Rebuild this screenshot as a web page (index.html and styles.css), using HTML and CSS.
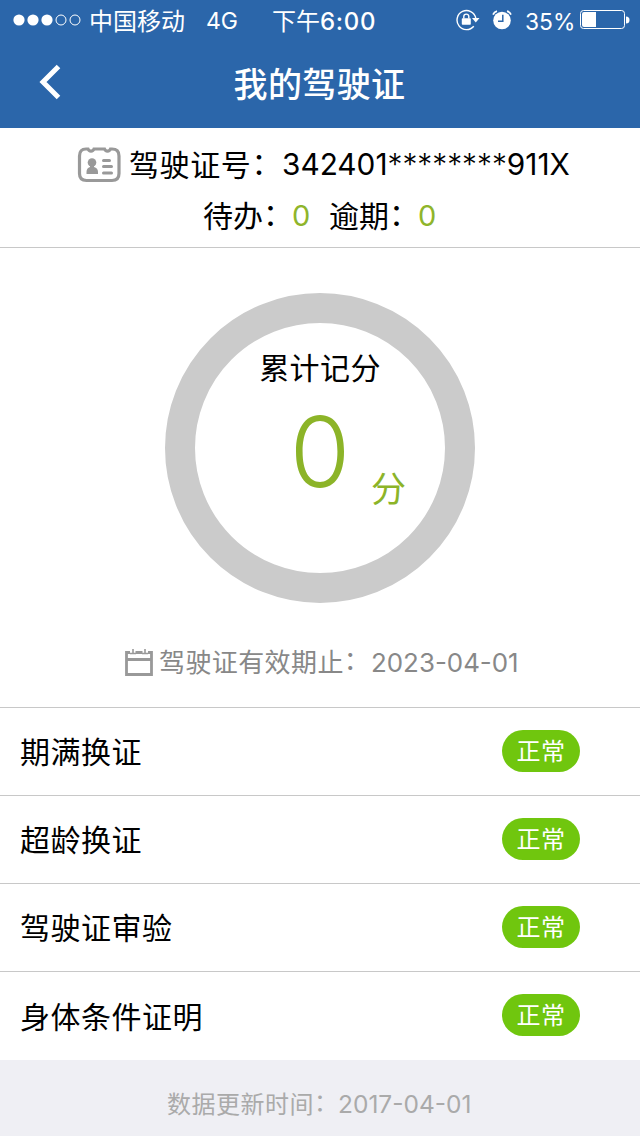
FILE: index.html
```html
<!DOCTYPE html>
<html lang="zh-CN">
<head>
  <meta charset="UTF-8">
  <meta name="viewport" content="width=device-width, initial-scale=1.0">
  <title>我的驾驶证</title>
  <link rel="stylesheet" href="styles.css">
</head>
<body>
  <div class="status-bar">
    <svg class="signal" width="68" height="12" viewBox="0 0 68 12">
      <g fill="#fff">
        <circle cx="6" cy="6" r="5.6"/>
        <circle cx="20" cy="6" r="5.6"/>
        <circle cx="34" cy="6" r="5.6"/>
      </g>
      <g fill="none" stroke="#fff">
        <circle cx="48" cy="6" r="5"/>
        <circle cx="62" cy="6" r="5"/>
      </g>
    </svg>
    <span class="carrier">中国移动</span>
    <span class="network">4G</span>
    <span class="time">下午<b>6:00</b></span>
    <svg class="lock" width="24" height="22" viewBox="0 0 24 22">
      <path d="M17.8 17.2A9.5 9.5 0 1 1 19.8 9" fill="none" stroke="#fff" stroke-width="1.4"/>
      <path d="M16 9h7.5l-3.7 4.4z" fill="#fff"/>
      <rect x="5.8" y="9.3" width="9" height="6.4" rx="0.8" fill="#fff"/>
      <path d="M7.8 9.5V7.6a2.5 2.5 0 0 1 5 0v1.9" fill="none" stroke="#fff" stroke-width="1.4"/>
    </svg>
    <svg class="alarm" width="20" height="20" viewBox="0 0 20 20">
      <circle cx="10" cy="10.5" r="8.8" fill="#fff"/>
      <path d="M1 4.6A6 6 0 0 1 5 1.2M15 1.2a6 6 0 0 1 4 3.4" fill="none" stroke="#fff" stroke-width="1.8"/>
      <path d="M10.8 4.8v6.4H6" fill="none" stroke="#2b66aa" stroke-width="1.5"/>
    </svg>
    <span class="percent">35%</span>
    <svg class="battery" width="50" height="20" viewBox="0 0 50 20">
      <rect x="0.5" y="0.5" width="44" height="18" rx="3" fill="none" stroke="#fff"/>
      <path d="M4 2h12v15H4a2 2 0 0 1-2-2V4a2 2 0 0 1 2-2z" fill="#fff"/>
      <path d="M46 6.5a3 3 0 0 1 0 7z" fill="#fff"/>
    </svg>
  </div>

  <div class="nav">
    <svg class="back" width="22" height="36" viewBox="0 0 22 36">
      <path d="M19.500 2.500L4 18l15.500 15.500" fill="none" stroke="#fff" stroke-width="5"/>
    </svg>
    <h1>我的驾驶证</h1>
  </div>

  <div class="license">
    <div class="license-no">
      <svg width="44" height="36" viewBox="0 0 44 36">
        <path d="M11 2H9Q2.500 2 2.500 9V26.500Q2.500 33.500 9.500 33.500H35Q42 33.500 42 26.500V9Q42 2 35 2H33.500A3.200 3.200 0 0 1 27.500 2H17A3.200 3.200 0 0 1 11 2Z" fill="none" stroke="#999" stroke-width="3.200"/>
        <circle cx="15" cy="15.500" r="4.300" fill="#999"/>
        <path d="M13 18h4v2q4 1 4 5v2H9.500V25q0-4 3.500-5z" fill="#999"/>
        <path d="M26.500 13.500h6M26.500 19.500h8M26.500 26h8" stroke="#999" stroke-width="3" stroke-linecap="round"/>
      </svg>
      <span class="label">驾驶证号<i>：</i></span>
      <span class="number">342401<i>********</i>911X</span>
    </div>
    <div class="todo">
      <span class="label">待办<i>：</i></span><em>0</em>
      <span class="label">逾期<i>：</i></span><em>0</em>
    </div>
  </div>

  <div class="score">
    <div class="ring">
      <div class="ring-title">累计记分</div>
      <div class="points"><span class="value">0</span><span class="unit">分</span></div>
    </div>
    <div class="valid">
      <svg width="28" height="29" viewBox="0 0 28 29">
        <path d="M5 4.500H1.500v22h25v-22H23M10.500 4.500h7M1 11.500h26" fill="none" stroke="#999" stroke-width="2.800"/>
        <path d="M5 5.500h6M17 5.500h6M8 1v5M20 1v5" fill="none" stroke="#999" stroke-width="1.600"/>
      </svg>
      <span class="label">驾驶证有效期止<i>：</i></span>
      <span class="date">2023-04-01</span>
    </div>
  </div>

  <ul class="list">
    <li><span>期满换证</span><span class="tag">正常</span></li>
    <li><span>超龄换证</span><span class="tag">正常</span></li>
    <li><span>驾驶证审验</span><span class="tag">正常</span></li>
    <li><span>身体条件证明</span><span class="tag">正常</span></li>
  </ul>

  <div class="footer">
    <span class="label">数据更新时间<i>：</i></span>
    <span class="date">2017-04-01</span>
  </div>
</body>
</html>
```
FILE: styles.css
```css
* {
  box-sizing: border-box;
}

body {
  margin: 0;
  width: 640px;
  height: 1136px;
  overflow: hidden;
  font-family: Inter, "Noto Sans CJK SC", sans-serif;
  font-size: 30px;
  color: #000;
  background: #efeff4;
}

svg {
  display: block;
  flex: none;
}

span {
  white-space: nowrap;
}

.label {
  padding-bottom: 4px;
  font-family: "Noto Sans CJK SC", sans-serif;
}

.label i {
  font-style: normal;
  line-height: 0;
  vertical-align: 2px;
}

/* status bar */
.status-bar {
  display: flex;
  align-items: center;
  height: 40px;
  padding-left: 13px;
  font-size: 24px;
  color: #fff;
  background: #2b66aa;
}

.carrier {
  width: 98px;
  margin-left: 8px;
  padding-bottom: 2px;
}

.network {
  width: 52px;
  margin-left: 19px;
  padding-top: 2px;
  font-size: 23px;
}

.time {
  width: 105px;
  margin-left: 14px;
  padding-bottom: 2px;
}

.time b {
  font-weight: 500;
  font-size: 24px;
  letter-spacing: 0.700px;
}

.lock {
  margin-left: 79px;
}

.alarm {
  margin-left: 12px;
}

.percent {
  width: 48px;
  margin-left: 13px;
  padding-top: 2px;
  font-size: 22.800px;
}

.battery {
  margin-left: 7px;
}

/* title bar */
.nav {
  display: flex;
  align-items: center;
  height: 88px;
  padding: 0 39px 4px;
  color: #fff;
  background: #2b66aa;
}

.nav h1 {
  flex: 1;
  margin: 0 23px 0 0;
  font-size: 34px;
  font-weight: 500;
  letter-spacing: 0.400px;
  text-align: center;
}

/* license number */
.license {
  height: 120px;
  padding-top: 11px;
  background: #fff;
  border-bottom: 1px solid #c8c8c8;
}

.license-no {
  display: flex;
  align-items: center;
  height: 52px;
  padding-left: 77px;
}

.license-no .label {
  width: 153px;
  margin-left: 8px;
  letter-spacing: 0.600px;
}

.license-no .number {
  padding-bottom: 2px;
  font-size: 29.800px;
}

.number i {
  font-style: normal;
  font-weight: 300;
}

.todo {
  display: flex;
  align-items: center;
  height: 50px;
  padding-left: 203px;
}

.todo span {
  width: 89px;
}

.todo em {
  width: 37px;
  padding-bottom: 2px;
  font-style: normal;
  font-size: 29px;
  color: #8fb52b;
}

/* score ring */
.score {
  height: 460px;
  padding-top: 45px;
  background: #fff;
  border-bottom: 1px solid #c8c8c8;
}

.ring {
  width: 310px;
  height: 310px;
  margin: 0 auto;
  padding-top: 23px;
  border: 30px solid #cbcbcb;
  border-radius: 50%;
  text-align: center;
}

.ring-title {
  line-height: 44px;
  letter-spacing: 0.400px;
}

.points {
  display: grid;
  grid-template-columns: 1fr 60px 1fr;
  height: 120px;
  color: #8cb428;
}

.value {
  grid-column: 2;
  justify-self: center;
  line-height: 124px;
  font-size: 98px;
  font-weight: 300;
}

.unit {
  padding: 75px 0 0 21px;
  line-height: 48px;
  font-size: 35px;
  text-align: left;
}

.valid {
  display: flex;
  align-items: center;
  height: 40px;
  margin-top: 39px;
  padding-left: 125px;
  font-size: 26px;
  color: #888;
}

.valid .label {
  width: 212px;
  margin-left: 6px;
  letter-spacing: 0.400px;
}

.valid .date {
  font-size: 25.900px;
}

/* business list */
.list {
  margin: 0;
  padding: 0;
  list-style: none;
  background: #fff;
}

.list li {
  display: flex;
  align-items: center;
  justify-content: space-between;
  height: 88px;
  padding: 0 60px 2px 20px;
  letter-spacing: 0.500px;
  border-bottom: 1px solid #c8c8c8;
}

.list li:last-child {
  border-bottom: none;
}

.list span:first-child {
  padding-bottom: 1px;
}

.tag {
  width: 78px;
  height: 42px;
  line-height: 44px;
  font-size: 24px;
  text-align: center;
  color: #fff;
  background: #70c60e;
  border-radius: 21px;
}

.footer {
  display: flex;
  align-items: center;
  height: 76px;
  padding: 12px 0 0 167px;
  font-size: 24px;
  color: #aaa;
}

.footer .label {
  width: 171px;
  letter-spacing: 0.500px;
}

.footer .date {
  font-size: 24.500px;
}
```
